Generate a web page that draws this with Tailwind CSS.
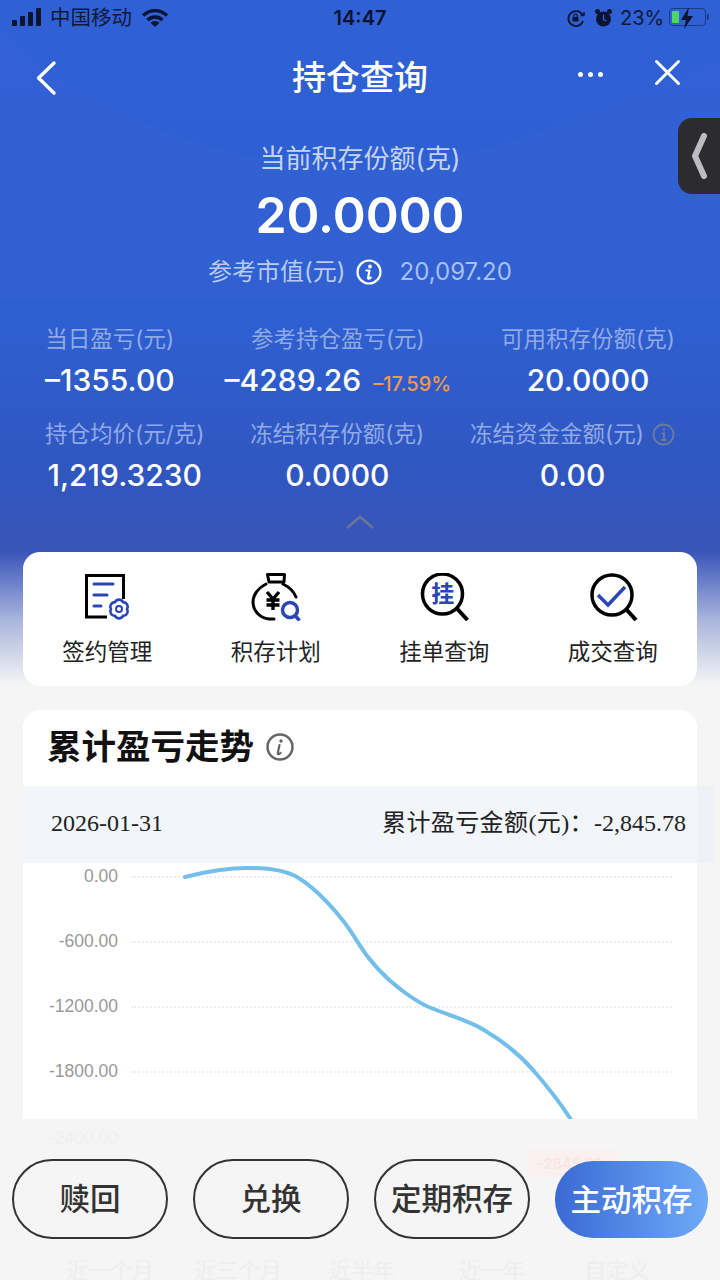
<!DOCTYPE html>
<html><head><meta charset="utf-8"><script src="https://cdn.jsdelivr.net/npm/@tailwindcss/browser@4"></script></head>
<body class="m-0">
<div class="relative w-[720px] h-[1280px] overflow-hidden bg-[#f5f5f5] font-['Inter','Noto_Sans_CJK_SC',sans-serif]">
  <!-- header gradient -->
  <div class="absolute left-0 top-0 w-[720px] h-[690px] bg-[linear-gradient(to_bottom,#2f60d5_0px,#2e5fd0_330px,#3056bf_480px,#3a55b8_552px,#a9b5dc_620px,#f5f5f5_685px)]"></div>
  <svg class="absolute left-0 top-0" width="720" height="330" viewBox="0 0 720 330" fill="none"><path d="M0 25C60 95 200 165 360 168C480 165 600 110 720 55V300H0Z" fill="#fff" fill-opacity="0.012"/></svg>

  <div class="relative">
    <!-- status bar -->
    <div class="h-9 relative text-[#0b1430]">
      <div class="absolute left-[12px] top-[8px] flex items-end gap-[3px] h-[18px]">
        <div class="w-[5px] h-[6px] bg-[#0b1430] rounded-[1px]"></div><div class="w-[5px] h-[10px] bg-[#0b1430] rounded-[1px]"></div><div class="w-[5px] h-[14px] bg-[#0b1430] rounded-[1px]"></div><div class="w-[5px] h-[18px] bg-[#0b1430] rounded-[1px]"></div>
      </div>
      <div class="absolute left-[50px] top-[6px] text-[20.500px] leading-6 text-[#10193a]">中国移动</div>
      <svg class="absolute left-[141px] top-[8px]" width="28" height="20" viewBox="0 0 28 20" fill="none" stroke="#0b1430" stroke-width="3.400"><path d="M2 7.500C9.500 1 18.500 1 26 7.500"/><path d="M6.500 12C11 8 17 8 21.500 12"/><path d="M14 19l-4.500-4.300c2.500-1.800 6.500-1.800 9 0z" fill="#0b1430" stroke="none"/></svg>
      <div class="absolute left-0 right-0 top-[6px] text-center text-[20px] leading-6 font-semibold text-[#0b1430]">14:47</div>
      <svg class="absolute left-[566px] top-[9px]" width="20" height="19" viewBox="0 0 20 19" fill="none" stroke="#0b1430" stroke-width="1.800"><path d="M17 12A7.500 7.500 0 1 1 16.500 6"/><path d="M14.500 6.500h3.500V3" stroke-width="1.500"/><rect x="6.500" y="8" width="6" height="4.500" fill="#0b1430" stroke="none"/><path d="M7.800 8V6.800a1.700 1.700 0 0 1 3.400 0V8" stroke-width="1.200"/></svg>
      <svg class="absolute left-[594px] top-[8px]" width="19" height="20" viewBox="0 0 19 20" fill="#0b1430"><circle cx="9.500" cy="11" r="7.500"/><circle cx="3.500" cy="3.500" r="2.500"/><circle cx="15.500" cy="3.500" r="2.500"/><path d="M9.500 6.500v5l3 1.500" stroke="#2f62d6" stroke-width="1.300" fill="none"/></svg>
      <div class="absolute left-[620px] top-[6px] text-[20px] leading-6 text-[#10193a]">23%</div>
      <div class="absolute left-[669px] top-[8px] w-[37px] h-[18px] rounded-[4px] border border-[#1c3a86] p-[2px]"><div class="w-[7px] h-full bg-[#4fd65b] rounded-[1px]"></div></div>
      <svg class="absolute left-[679px] top-[6px]" width="16" height="24" viewBox="0 0 16 24" fill="#0b1430"><path d="M10 1L2 14h5l-2 9 9-13H8.500z"/></svg>
      <div class="absolute left-[707px] top-[14px] w-[2px] h-[6px] bg-[#1c3a86] rounded-r"></div>
    </div>

    <!-- nav -->
    <div class="h-[84px] relative">
      <svg class="absolute left-[34px] top-[24px]" width="24" height="36" viewBox="0 0 24 36" fill="none" stroke="#fff" stroke-width="3.400" stroke-linecap="round" stroke-linejoin="round"><path d="M20 3L4.500 18 20 33"/></svg>
      <div class="absolute left-0 right-0 top-[20px] text-center text-[34px] leading-[44px] text-white font-medium">持仓查询</div>
      <div class="absolute left-[578px] top-[36px] flex gap-[5px]"><div class="w-[5px] h-[5px] rounded-full bg-white"></div><div class="w-[5px] h-[5px] rounded-full bg-white"></div><div class="w-[5px] h-[5px] rounded-full bg-white"></div></div>
      <svg class="absolute left-[654px] top-[23px]" width="27" height="27" viewBox="0 0 27 27" fill="none" stroke="#fff" stroke-width="3" stroke-linecap="round"><path d="M2.500 2.500l22 22M24.500 2.500l-22 22"/></svg>
    </div>

    <!-- summary -->
    <div class="flex flex-col items-center">
      <div class="mt-[22px] text-[26px] leading-[34px] text-[#c5d3f3]">当前积存份额(克)</div>
      <div class="mt-[8px] text-[50px] leading-[62px] text-white font-semibold">20.0000</div>
      <div class="mt-[10px] h-8 flex items-center text-[24px] text-[#b8caf2]">
        <span>参考市值(元)</span>
        <svg class="ml-[10px]" width="26" height="26" viewBox="0 0 26 26" fill="none"><circle cx="13" cy="13" r="11.500" stroke="#fff" stroke-width="2.200"/><circle cx="14" cy="7.500" r="1.900" fill="#fff"/><path d="M13.500 11.500l-1.500 7.500c0 1 1.500 .8 2.700-.5M10.500 11.500h3" stroke="#fff" stroke-width="2.200" stroke-linecap="round"/></svg>
        <span class="ml-[18px] text-[24px] text-[#a9bfee]">20,097.20</span>
      </div>
    </div>

    <!-- stats -->
    <div class="relative mt-[35px] h-[170px] px-[45px]">
      <div class="flex justify-between text-center h-[95px]">
        <div>
          <div class="text-[22.500px] leading-8 text-[#91aae6]">当日盈亏(元)</div>
          <div class="mt-[3px] text-[30px] leading-[44px] text-white font-medium">–1355.00</div>
        </div>
        <div>
          <div class="text-[22.500px] leading-8 text-[#91aae6]">参考持仓盈亏(元)</div>
          <div class="mt-[3px] text-[30px] leading-[44px] text-white font-medium whitespace-nowrap">–4289.26<span class="ml-[12px] text-[20px] text-[#ef9a4c]">–17.59%</span></div>
        </div>
        <div>
          <div class="text-[22.500px] leading-8 text-[#91aae6]">可用积存份额(克)</div>
          <div class="mt-[3px] text-[30px] leading-[44px] text-white font-medium">20.0000</div>
        </div>
      </div>
      <div class="flex justify-between text-center">
        <div>
          <div class="text-[22.500px] leading-8 text-[#91aae6]">持仓均价(元/克)</div>
          <div class="mt-[3px] text-[30px] leading-[44px] text-white font-medium">1,219.3230</div>
        </div>
        <div>
          <div class="text-[22.500px] leading-8 text-[#91aae6]">冻结积存份额(克)</div>
          <div class="mt-[3px] text-[30px] leading-[44px] text-white font-medium">0.0000</div>
        </div>
        <div>
          <div class="text-[22.500px] leading-8 text-[#91aae6] flex justify-center items-center gap-[8px] whitespace-nowrap">冻结资金金额(元)<svg width="23" height="23" viewBox="0 0 23 23" fill="none" stroke="#6e7a9e" stroke-width="1.800"><circle cx="11.500" cy="11.500" r="10"/><circle cx="12" cy="6.500" r="1.300" fill="#6e7a9e" stroke="none"/><path d="M9.500 10.500h2.500v6M9.500 17h5"/></svg></div>
          <div class="mt-[3px] text-[30px] leading-[44px] text-white font-medium">0.00</div>
        </div>
      </div>
      <svg class="absolute left-[345px] top-[191px]" width="30" height="16" viewBox="0 0 30 16" fill="none" stroke="#6c7795" stroke-width="2.500"><path d="M2 14L15 3l13 11"/></svg>
    </div>
  </div>

  <!-- function card -->
  <div class="absolute left-[23px] top-[552px] w-[674px] h-[134px] bg-white rounded-[17px] grid grid-cols-4">
    <div class="flex flex-col items-center pt-[21px]">
      <svg width="50" height="48" viewBox="0 0 50 48" fill="none"><path d="M25 44H4.500V2.500h37V26" stroke="#000" stroke-width="3"/><path d="M12 11h19M12 22h13M12 33h7" stroke="#2a45b5" stroke-width="3" stroke-linecap="round"/><circle cx="37" cy="36" r="3" stroke="#2a45b5" stroke-width="2"/><path d="M45 36A4.500 4.500 0 0 1 41 42.900A4.500 4.500 0 0 1 33 42.900A4.500 4.500 0 0 1 29 36A4.500 4.500 0 0 1 33 29.100A4.500 4.500 0 0 1 41 29.100A4.500 4.500 0 0 1 45 36Z" stroke="#2a45b5" stroke-width="2.600" stroke-linejoin="round"/></svg>
      <div class="mt-[15px] text-[22.500px] leading-8 text-[#222]">签约管理</div>
    </div>
    <div class="flex flex-col items-center pt-[21px]">
      <svg width="50" height="48" viewBox="0 0 50 48" fill="none"><path d="M18 9l-1.500-7.500h17L33 9z" stroke="#000" stroke-width="3" stroke-linejoin="round"/><path d="M32 11c6 3 11 8 13 13M15 11C7 15 2 22 2 29c0 9 7 16 16 17h5" stroke="#000" stroke-width="3" stroke-linecap="round"/><path d="M16 19l6 7 6-7M22 26v11M15.500 27h13M15.500 32h13" stroke="#000" stroke-width="3.400"/><circle cx="39" cy="37" r="7.500" stroke="#2a45b5" stroke-width="3.500"/><path d="M44 42.500l4.500 5" stroke="#2a45b5" stroke-width="3.500"/></svg>
      <div class="mt-[15px] text-[22.500px] leading-8 text-[#222]">积存计划</div>
    </div>
    <div class="flex flex-col items-center pt-[21px]">
      <div class="relative w-[50px] h-[48px]"><svg class="absolute left-0 top-0" width="50" height="48" viewBox="0 0 50 48" fill="none"><circle cx="23.500" cy="21" r="20" stroke="#000" stroke-width="3.500"/><path d="M37.500 35l11 12" stroke="#000" stroke-width="4"/></svg><span class="absolute left-[12px] top-[7px] text-[23px] leading-[28px] font-bold text-[#2a45b5]">挂</span></div>
      <div class="mt-[15px] text-[22.500px] leading-8 text-[#222]">挂单查询</div>
    </div>
    <div class="flex flex-col items-center pt-[21px]">
      <svg width="50" height="48" viewBox="0 0 50 48" fill="none"><circle cx="24" cy="22" r="20" stroke="#000" stroke-width="3.500"/><path d="M38 36l10 11" stroke="#000" stroke-width="4"/><path d="M10 22l10 10 17-18" stroke="#2a45b5" stroke-width="3.500"/></svg>
      <div class="mt-[15px] text-[22.500px] leading-8 text-[#222]">成交查询</div>
    </div>
  </div>

  <!-- faded content under bottom bar -->
  <div class="absolute left-[49px] top-[1125px] text-[17.500px] text-[#f0f0f0] font-['Liberation_Sans',sans-serif]">-2400.00</div>
  <div class="absolute left-[527px] top-[1150px] w-[90px] h-[27px] bg-[#faf0ee] text-[#f7e3df] text-[15px] pl-[10px] leading-[27px]">-2845.78</div>
  <div class="absolute left-0 top-[1254px] w-[720px] h-[26px] overflow-hidden text-[22px] leading-8 text-[#eeeeee]">
    <div class="flex"><span class="ml-[66px]">近一个月</span><span class="ml-[40px]">近三个月</span><span class="ml-[47px]">近半年</span><span class="ml-[64px]">近一年</span><span class="ml-[59px]">自定义</span></div>
  </div>

  <!-- chart card -->
  <div class="absolute left-[23px] top-[710px] w-[674px] h-[409px] bg-white rounded-t-[17px]">
    <div class="h-[76px] flex items-center pl-[24px] pb-[3px]">
      <span class="text-[34.500px] leading-[40px] font-bold text-[#111]">累计盈亏走势</span>
      <svg class="ml-[12px]" width="28" height="28" viewBox="0 0 28 28" fill="none"><circle cx="14" cy="14" r="12.500" stroke="#666" stroke-width="2.500"/><circle cx="15" cy="8" r="1.700" fill="#666"/><path d="M13.500 12l-1.800 8.500c0 1 1.500 .8 2.800-.6" stroke="#666" stroke-width="2.200" stroke-linecap="round"/></svg>
    </div>
    <!-- chart -->
    <div class="relative h-[333px] overflow-hidden">
      <div class="absolute left-[108px] right-[25px] top-[90px] border-t-2 border-dotted border-[#eeeeee]"></div>
      <div class="absolute left-[108px] right-[25px] top-[155px] border-t-2 border-dotted border-[#eeeeee]"></div>
      <div class="absolute left-[108px] right-[25px] top-[220px] border-t-2 border-dotted border-[#eeeeee]"></div>
      <div class="absolute left-[108px] right-[25px] top-[285px] border-t-2 border-dotted border-[#eeeeee]"></div>
      <div class="absolute left-0 w-[95px] top-[80px] text-right text-[17.500px] leading-5 text-[#999] font-['Liberation_Sans',sans-serif]">0.00</div>
      <div class="absolute left-0 w-[95px] top-[145px] text-right text-[17.500px] leading-5 text-[#999] font-['Liberation_Sans',sans-serif]">-600.00</div>
      <div class="absolute left-0 w-[95px] top-[210px] text-right text-[17.500px] leading-5 text-[#999] font-['Liberation_Sans',sans-serif]">-1200.00</div>
      <div class="absolute left-0 w-[95px] top-[275px] text-right text-[17.500px] leading-5 text-[#999] font-['Liberation_Sans',sans-serif]">-1800.00</div>
      <svg class="absolute left-0 top-0" width="674" height="333" viewBox="0 0 674 333" fill="none"><path d="M162 91C185 85 205 82 225 82C245 82 262 84 274 91C292 101.500 318 128 334 155C346 175 362 192 381 206C392 214 400 219 408 222C428 230 447 235 461 244C478 254 496 268 510 284C524 300 538 317 552 340" stroke="#72bfeb" stroke-width="4" stroke-linecap="round"/></svg>
    </div>
    <!-- tooltip -->
    <div class="absolute left-0 top-[76px] w-[691px] h-[77px] bg-[#e9f0f6]/60 flex items-center justify-between pl-[28px] pr-[28px] pb-[3px] font-['Liberation_Serif','Noto_Sans_CJK_SC',serif] text-[24px] text-[#222]">
      <span>2026-01-31</span><span class="whitespace-nowrap"><span class="tracking-[0.4px]">累计盈亏金额(元)：</span>-2,845.78</span>
    </div>
  </div>

  <!-- bottom buttons -->
  <div class="absolute left-[12px] top-[1159px] flex gap-[25px]">
    <div class="w-[156px] h-[80px] rounded-[40px] border-2 border-[#333] flex items-center justify-center text-[30.500px] font-medium text-[#333]">赎回</div>
    <div class="w-[156px] h-[80px] rounded-[40px] border-2 border-[#333] flex items-center justify-center text-[30.500px] font-medium text-[#333]">兑换</div>
    <div class="w-[156px] h-[80px] rounded-[40px] border-2 border-[#333] flex items-center justify-center text-[30.500px] font-medium text-[#333] whitespace-nowrap">定期积存</div>
  </div>
  <div class="absolute left-[555px] top-[1161px] w-[153px] h-[77px] rounded-[38px] bg-[linear-gradient(to_right,#3a6ad4,#6eaaf8)] flex items-center justify-center text-[30.500px] font-medium text-white whitespace-nowrap">主动积存</div>

  <!-- side handle -->
  <div class="absolute left-[678px] top-[118px] w-[42px] h-[76px] bg-[#2c2c2e] rounded-l-[14px] flex items-center justify-center">
    <svg width="20" height="46" viewBox="0 0 20 46" fill="none"><path d="M15 3L6 23l9 20" stroke="#bcbdc2" stroke-width="6" stroke-linecap="round" stroke-linejoin="round"/></svg>
  </div>
</div>
</body></html>
